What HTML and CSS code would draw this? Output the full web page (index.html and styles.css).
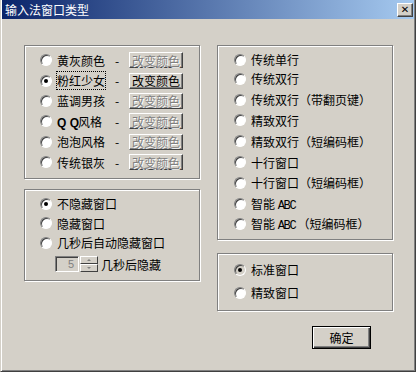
FILE: index.html
```html
<!DOCTYPE html>
<html lang="zh-CN">
<head>
  <meta charset="UTF-8" />
  <title>输入法窗口类型</title>
  <link rel="stylesheet" href="styles.css">
</head>
<body>
  <div class="window">
    <div class="titlebar">
      <span class="title">输入法窗口类型</span>
      <span class="close">✕</span>
    </div>
    <div class="client">
      <div class="col">
        <div class="group g-colors">
          <div class="row">
            <span class="radio"></span><span class="label">黄灰颜色</span><span class="dash">-</span><button class="btn small" disabled>改变颜色</button>
          </div>
          <div class="row">
            <span class="radio on"></span><span class="label"><span class="focus">粉红少女</span></span><span class="dash">-</span><button class="btn small">改变颜色</button>
          </div>
          <div class="row">
            <span class="radio"></span><span class="label">蓝调男孩</span><span class="dash">-</span><button class="btn small" disabled>改变颜色</button>
          </div>
          <div class="row">
            <span class="radio"></span><span class="label"><b class="qq">Q Q</b>风格</span><span class="dash">-</span><button class="btn small" disabled>改变颜色</button>
          </div>
          <div class="row">
            <span class="radio"></span><span class="label">泡泡风格</span><span class="dash">-</span><button class="btn small" disabled>改变颜色</button>
          </div>
          <div class="row">
            <span class="radio"></span><span class="label">传统银灰</span><span class="dash">-</span><button class="btn small" disabled>改变颜色</button>
          </div>
        </div>

        <div class="group g-hide">
          <div class="row"><span class="radio on"></span><span>不隐藏窗口</span></div>
          <div class="row"><span class="radio"></span><span>隐藏窗口</span></div>
          <div class="row"><span class="radio"></span><span>几秒后自动隐藏窗口</span></div>
          <div class="spin-row">
            <span class="numbox">5</span>
            <span class="spin">
              <span class="spin-btn"><span class="arrow up"></span></span>
              <span class="spin-btn"><span class="arrow down"></span></span>
            </span>
            <span class="spin-label">几秒后隐藏</span>
          </div>
        </div>
      </div>

      <div class="col">
        <div class="group g-styles">
          <div class="row"><span class="radio"></span><span>传统单行</span></div>
          <div class="row"><span class="radio"></span><span>传统双行</span></div>
          <div class="row"><span class="radio"></span><span>传统双行（带翻页键）</span></div>
          <div class="row"><span class="radio"></span><span>精致双行</span></div>
          <div class="row"><span class="radio"></span><span>精致双行（短编码框）</span></div>
          <div class="row"><span class="radio"></span><span>十行窗口</span></div>
          <div class="row"><span class="radio"></span><span>十行窗口（短编码框）</span></div>
          <div class="row"><span class="radio"></span><span>智能 <span class="abc">ABC</span></span></div>
          <div class="row"><span class="radio"></span><span>智能 <span class="abc">ABC</span>（短编码框）</span></div>
        </div>

        <div class="group g-size">
          <div class="row"><span class="radio on pressed"></span><span>标准窗口</span></div>
          <div class="row"><span class="radio"></span><span>精致窗口</span></div>
        </div>

        <div class="actions">
          <button class="btn ok">确定</button>
        </div>
      </div>
    </div>
  </div>
</body>
</html>
```

FILE: styles.css
```css
body {
  margin: 0;
  background: #d4d0c8;
  color: #000;
  font-family: "Noto Sans CJK SC", "Liberation Sans", sans-serif;
  font-size: 12px;
}
.window {
  width: 416px;
  height: 372px;
  box-sizing: border-box;
  padding: 0 1px 1px 1px;
  background: #d4d0c8;
  border-left: 1px solid #d4d0c8;
  border-right: 1px solid #404040;
  border-bottom: 1px solid #404040;
  box-shadow: inset 1px 0 #fff, inset -1px -1px #808080;
}
.titlebar {
  height: 19px;
  display: flex;
  align-items: center;
  justify-content: space-between;
  padding: 0 1px 0 3px;
  background: linear-gradient(90deg, #0a246a, #a6caf0);
  color: #fff;
}
.title {
  line-height: 19px;
}
.close {
  width: 16px;
  height: 14px;
  box-sizing: border-box;
  display: flex;
  align-items: center;
  justify-content: center;
  background: #d4d0c8;
  color: #000;
  font-family: "DejaVu Sans", sans-serif;
  font-size: 10px;
  font-weight: bold;
  border: 1px solid;
  border-color: #fff #404040 #404040 #fff;
  box-shadow: inset -1px -1px #808080;
}
.client {
  display: grid;
  grid-template-columns: 176px 176px;
  column-gap: 17px;
  padding: 26px 0 0 22px;
}
.group {
  box-sizing: border-box;
  border: 1px solid #808080;
  box-shadow: inset 1px 1px #fff, 1px 1px #fff;
}
.row {
  display: flex;
  align-items: center;
  white-space: nowrap;
}
.radio {
  width: 12px;
  height: 12px;
  box-sizing: border-box;
  flex: none;
  margin-right: 5px;
  border-radius: 50%;
  background: #fff;
  border: 1px solid;
  border-color: #808080 #fff #fff #808080;
  box-shadow: inset 1px 1px #404040;
  display: flex;
  align-items: center;
  justify-content: center;
}
.radio.on::after {
  content: "";
  width: 4px;
  height: 4px;
  border-radius: 50%;
  background: #000;
}
.radio.pressed {
  background: #d4d0c8;
}

/* 颜色方案 */
.g-colors {
  height: 134px;
  padding: 4px 0 0 15px;
}
.g-colors .row {
  height: 20.4px;
}
.label {
  width: 58px;
}
.focus {
  outline: 1px dotted #000;
  outline-offset: 0;
}
.qq {
  display: inline-block;
  width: 21px;
  font-family: "Liberation Sans", sans-serif;
  font-size: 12px;
}
.dash {
  width: 14px;
}
.btn {
  font-family: inherit;
  font-size: 12px;
  color: #000;
  background: #d4d0c8;
  padding: 0;
  box-sizing: border-box;
  border: 1px solid;
  border-color: #fff #404040 #404040 #fff;
  box-shadow: inset -1px -1px #808080;
}
.btn.small {
  width: 54px;
  height: 16px;
  line-height: 13px;
}
.btn:disabled {
  color: #808080;
  text-shadow: 1px 1px #fff;
}

/* 隐藏方式 */
.g-hide {
  height: 92px;
  margin-top: 10px;
  padding: 4px 0 0 15px;
}
.g-hide .row {
  height: 19.5px;
}
.spin-row {
  display: flex;
  align-items: center;
  margin: 3px 0 0 15px;
}
.numbox {
  width: 24px;
  height: 16px;
  box-sizing: border-box;
  border: 1px solid;
  border-color: #808080 #fff #fff #808080;
  box-shadow: inset 1px 1px #404040;
  color: #808080;
  text-align: right;
  padding-right: 4px;
  font-family: "Liberation Sans", sans-serif;
  font-size: 11px;
  line-height: 14px;
}
.spin {
  width: 18px;
  height: 16px;
  margin-left: 1px;
  display: flex;
  flex-direction: column;
}
.spin-btn {
  flex: 1;
  box-sizing: border-box;
  border: 1px solid;
  border-color: #fff #404040 #404040 #fff;
  display: flex;
  align-items: center;
  justify-content: center;
}
.arrow {
  width: 0;
  height: 0;
  border-left: 2px solid transparent;
  border-right: 2px solid transparent;
}
.arrow.up {
  border-bottom: 2px solid #808080;
}
.arrow.down {
  border-top: 2px solid #808080;
}
.spin-label {
  margin-left: 3px;
}

/* 窗口样式 */
.g-styles {
  height: 195px;
  padding: 5px 0 0 16px;
}
.g-styles .row {
  height: 20.8px;
}
.g-styles .row:first-child {
  height: 17.5px;
}
.abc {
  font-family: "Liberation Mono", monospace;
  font-size: 12px;
  letter-spacing: -1.3px;
  margin-right: 2px;
}
.g-size {
  height: 58px;
  margin-top: 13px;
  padding: 4px 0 0 16px;
}
.g-size .row {
  height: 23px;
}
.actions {
  display: flex;
  justify-content: flex-end;
  padding: 15px 22px 0 0;
}
.btn.ok {
  width: 59px;
  height: 23px;
  border: 1px solid #000;
  box-shadow: inset 1px 1px #fff, inset -1px -1px #404040, inset -2px -2px #808080;
}
```
